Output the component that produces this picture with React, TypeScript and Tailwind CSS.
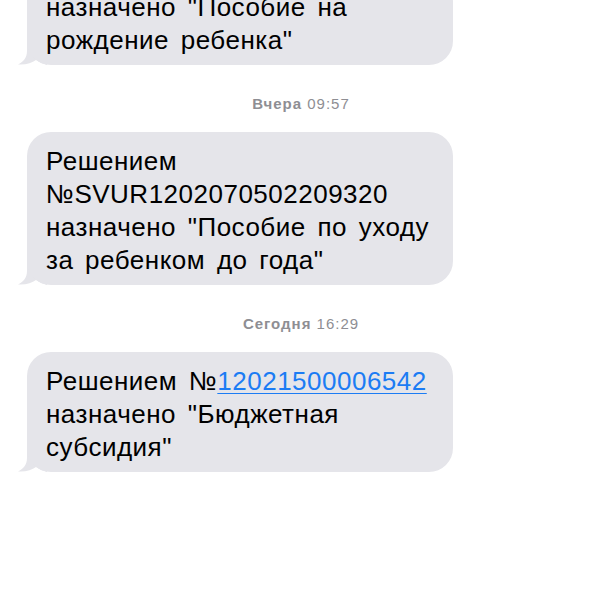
import React from "react";

function Tail() {
  return (
    <svg
      className="absolute bottom-0 left-[-10px]"
      width="30"
      height="24"
      viewBox="0 0 30 24"
    >
      <path
        d="M10 0 L10 10 C10 17 6 21 1 23.5 C9 24 15 22 19 19 C22 21 26 23 30 24 L30 0 Z"
        fill="#e5e5ea"
      />
    </svg>
  );
}

function Bubble({ children, className = "" }: { children: React.ReactNode; className?: string }) {
  return (
    <div className={"relative w-[426px] " + className}>
      <Tail />
      <div className="relative rounded-[24px] bg-[#e5e5ea] pl-[19px] pr-[10px] pt-[13px] pb-[8px] text-[26px] leading-[33px] tracking-[0.5px] [word-spacing:4px] text-black whitespace-nowrap">
        {children}
      </div>
    </div>
  );
}

function DateLabel({ day, time }: { day: string; time: string }) {
  return (
    <div className="mt-[30px] mb-[19px] text-center text-[15px] leading-[18px] tracking-[1px] text-[#8e8e93]">
      <span className="font-bold">{day}</span> {time}
    </div>
  );
}

export default function App() {
  return (
    <div
      className="h-[600px] w-[602px] overflow-hidden bg-white"
      style={{ fontFamily: '"Liberation Sans", Arial, sans-serif' }}
    >
      <div className="pl-[27px] mt-[-22px]">
        <Bubble>
          назначено "Пособие на
          <br />
          рождение ребенка"
        </Bubble>
      </div>
      <DateLabel day="Вчера" time="09:57" />
      <div className="pl-[27px]">
        <Bubble>
          Решением
          <br />
          №SVUR1202070502209320
          <br />
          назначено "Пособие по уходу
          <br />
          за ребенком до года"
        </Bubble>
      </div>
      <DateLabel day="Сегодня" time="16:29" />
      <div className="pl-[27px]">
        <Bubble>
          Решением №<span className="text-[#1c7cf4] underline decoration-1 underline-offset-[3px]">12021500006542</span>
          <br />
          назначено "Бюджетная
          <br />
          субсидия"
        </Bubble>
      </div>
    </div>
  );
}
